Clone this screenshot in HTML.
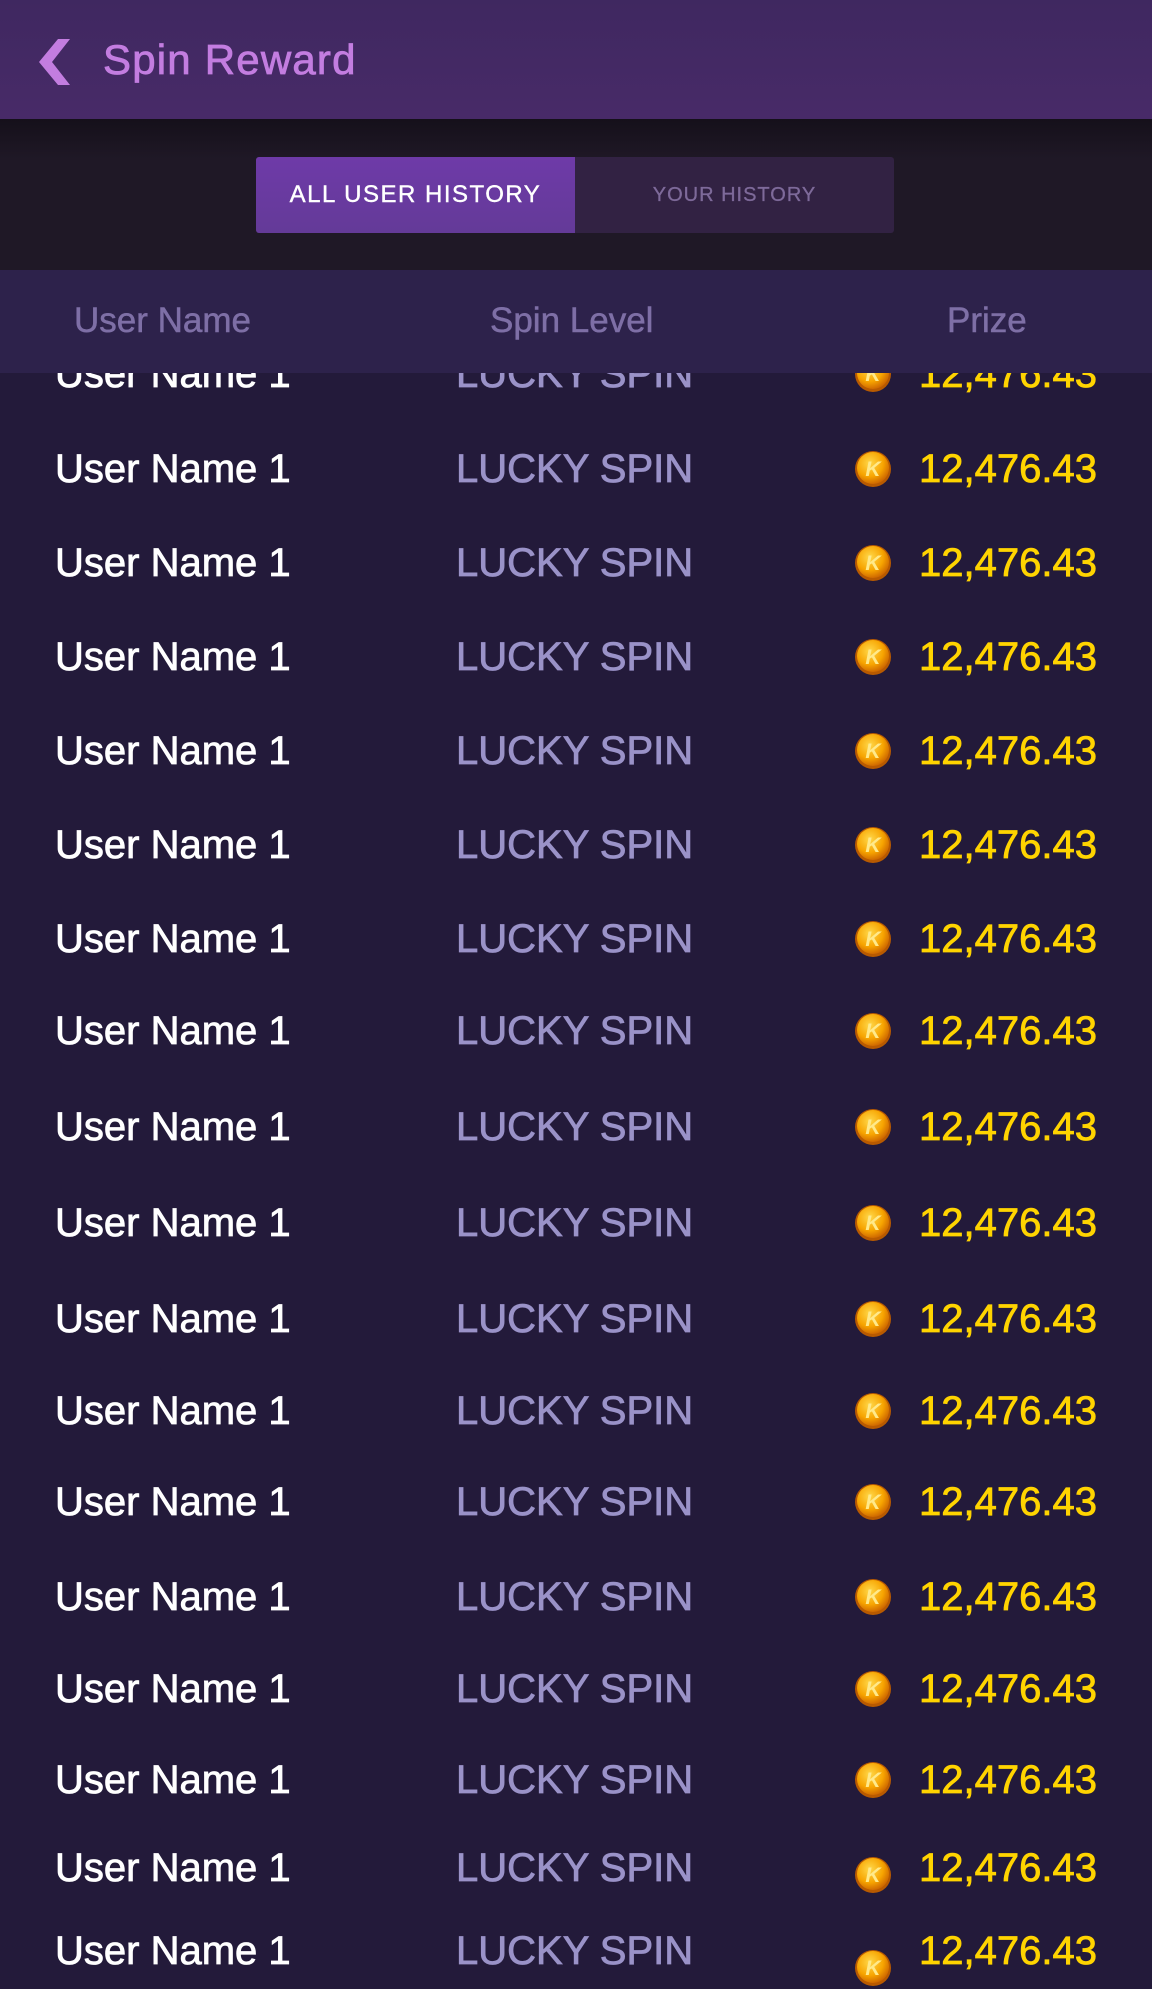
<!DOCTYPE html>
<html><head><meta charset="utf-8"><style>
*{margin:0;padding:0;box-sizing:border-box}
body{width:1152px;height:1954px;overflow:hidden;background:#231a3a;font-family:"Liberation Sans",sans-serif;position:relative}
.hdr{position:absolute;left:0;top:0;width:1152px;height:119px;background:linear-gradient(#3f2860,#482a68);z-index:5}
.title{position:absolute;left:103px;top:36px;font-size:42px;line-height:48px;color:#c37de0;letter-spacing:1.2px;-webkit-text-stroke:0.8px #c37de0}
.band{position:absolute;left:0;top:119px;width:1152px;height:151px;background:linear-gradient(#15101a,#1f1826 40px);z-index:5}
.tabs{position:absolute;left:256px;top:157px;width:638px;height:76px;background:#322243;border-radius:3px;z-index:6}
.tab1{position:absolute;left:0;top:0;width:319px;height:76px;background:linear-gradient(#6e3aa8,#643a98);border-radius:3px 0 0 3px;color:#fff;font-size:24px;line-height:76px;text-align:center;letter-spacing:1.5px;-webkit-text-stroke:0.4px #fff}
.tab2{position:absolute;left:319px;top:0;width:319px;height:76px;color:#7e6a9a;font-size:20px;line-height:76px;text-align:center;letter-spacing:1px;-webkit-text-stroke:0.3px #7e6a9a}
.th{position:absolute;left:0;top:270px;width:1152px;height:103px;background:#2d224b;z-index:5;color:#7e6fa6;font-size:35px;-webkit-text-stroke:0.5px #7e6fa6}
.th span{position:absolute;top:31px;line-height:40px}
.r{position:absolute;left:0;width:1152px;height:44px;font-size:40px;line-height:44px}
.r .u{position:absolute;left:55px;color:#fff;-webkit-text-stroke:0.8px #fff}
.r .l{position:absolute;left:456px;color:#9a92c8;-webkit-text-stroke:0.8px #9a92c8}
.r .p{position:absolute;left:919px;color:#ffd400;-webkit-text-stroke:0.8px #ffd400}
.r svg{position:absolute;left:854px;top:3px}
</style></head><body>
<div class="hdr">
<svg style="position:absolute;left:0;top:0" width="100" height="119"><polygon points="58,39 70,39 52,62 70,85 58,85 39,62" fill="#c37de0"/></svg>
<div class="title">Spin Reward</div>
</div>
<div class="band"></div>
<div class="tabs"><div class="tab1">ALL USER HISTORY</div><div class="tab2">YOUR HISTORY</div></div>
<div class="th"><span style="left:74px">User Name</span><span style="left:490px">Spin Level</span><span style="left:947px">Prize</span></div>
<svg width="0" height="0" style="position:absolute"><defs><radialGradient id="g" cx="40%" cy="35%" r="70%"><stop offset="0" stop-color="#ffd84a"/><stop offset="0.6" stop-color="#f7a400"/><stop offset="1" stop-color="#c85f00"/></radialGradient></defs></svg>
<div class="r" style="top:352px"><span class="u">User Name 1</span><span class="l">LUCKY SPIN</span><svg width="40" height="40"><circle cx="19" cy="19" r="18" fill="#b85a00"/><circle cx="19" cy="18" r="16" fill="url(#g)"/><text x="19" y="26" text-anchor="middle" font-size="21" font-weight="bold" font-style="italic" fill="#ffe98a" font-family="Liberation Sans">K</text></svg><span class="p">12,476.43</span></div>
<div class="r" style="top:447px"><span class="u">User Name 1</span><span class="l">LUCKY SPIN</span><svg width="40" height="40"><circle cx="19" cy="19" r="18" fill="#b85a00"/><circle cx="19" cy="18" r="16" fill="url(#g)"/><text x="19" y="26" text-anchor="middle" font-size="21" font-weight="bold" font-style="italic" fill="#ffe98a" font-family="Liberation Sans">K</text></svg><span class="p">12,476.43</span></div>
<div class="r" style="top:541px"><span class="u">User Name 1</span><span class="l">LUCKY SPIN</span><svg width="40" height="40"><circle cx="19" cy="19" r="18" fill="#b85a00"/><circle cx="19" cy="18" r="16" fill="url(#g)"/><text x="19" y="26" text-anchor="middle" font-size="21" font-weight="bold" font-style="italic" fill="#ffe98a" font-family="Liberation Sans">K</text></svg><span class="p">12,476.43</span></div>
<div class="r" style="top:635px"><span class="u">User Name 1</span><span class="l">LUCKY SPIN</span><svg width="40" height="40"><circle cx="19" cy="19" r="18" fill="#b85a00"/><circle cx="19" cy="18" r="16" fill="url(#g)"/><text x="19" y="26" text-anchor="middle" font-size="21" font-weight="bold" font-style="italic" fill="#ffe98a" font-family="Liberation Sans">K</text></svg><span class="p">12,476.43</span></div>
<div class="r" style="top:729px"><span class="u">User Name 1</span><span class="l">LUCKY SPIN</span><svg width="40" height="40"><circle cx="19" cy="19" r="18" fill="#b85a00"/><circle cx="19" cy="18" r="16" fill="url(#g)"/><text x="19" y="26" text-anchor="middle" font-size="21" font-weight="bold" font-style="italic" fill="#ffe98a" font-family="Liberation Sans">K</text></svg><span class="p">12,476.43</span></div>
<div class="r" style="top:823px"><span class="u">User Name 1</span><span class="l">LUCKY SPIN</span><svg width="40" height="40"><circle cx="19" cy="19" r="18" fill="#b85a00"/><circle cx="19" cy="18" r="16" fill="url(#g)"/><text x="19" y="26" text-anchor="middle" font-size="21" font-weight="bold" font-style="italic" fill="#ffe98a" font-family="Liberation Sans">K</text></svg><span class="p">12,476.43</span></div>
<div class="r" style="top:917px"><span class="u">User Name 1</span><span class="l">LUCKY SPIN</span><svg width="40" height="40"><circle cx="19" cy="19" r="18" fill="#b85a00"/><circle cx="19" cy="18" r="16" fill="url(#g)"/><text x="19" y="26" text-anchor="middle" font-size="21" font-weight="bold" font-style="italic" fill="#ffe98a" font-family="Liberation Sans">K</text></svg><span class="p">12,476.43</span></div>
<div class="r" style="top:1009px"><span class="u">User Name 1</span><span class="l">LUCKY SPIN</span><svg width="40" height="40"><circle cx="19" cy="19" r="18" fill="#b85a00"/><circle cx="19" cy="18" r="16" fill="url(#g)"/><text x="19" y="26" text-anchor="middle" font-size="21" font-weight="bold" font-style="italic" fill="#ffe98a" font-family="Liberation Sans">K</text></svg><span class="p">12,476.43</span></div>
<div class="r" style="top:1105px"><span class="u">User Name 1</span><span class="l">LUCKY SPIN</span><svg width="40" height="40"><circle cx="19" cy="19" r="18" fill="#b85a00"/><circle cx="19" cy="18" r="16" fill="url(#g)"/><text x="19" y="26" text-anchor="middle" font-size="21" font-weight="bold" font-style="italic" fill="#ffe98a" font-family="Liberation Sans">K</text></svg><span class="p">12,476.43</span></div>
<div class="r" style="top:1201px"><span class="u">User Name 1</span><span class="l">LUCKY SPIN</span><svg width="40" height="40"><circle cx="19" cy="19" r="18" fill="#b85a00"/><circle cx="19" cy="18" r="16" fill="url(#g)"/><text x="19" y="26" text-anchor="middle" font-size="21" font-weight="bold" font-style="italic" fill="#ffe98a" font-family="Liberation Sans">K</text></svg><span class="p">12,476.43</span></div>
<div class="r" style="top:1297px"><span class="u">User Name 1</span><span class="l">LUCKY SPIN</span><svg width="40" height="40"><circle cx="19" cy="19" r="18" fill="#b85a00"/><circle cx="19" cy="18" r="16" fill="url(#g)"/><text x="19" y="26" text-anchor="middle" font-size="21" font-weight="bold" font-style="italic" fill="#ffe98a" font-family="Liberation Sans">K</text></svg><span class="p">12,476.43</span></div>
<div class="r" style="top:1389px"><span class="u">User Name 1</span><span class="l">LUCKY SPIN</span><svg width="40" height="40"><circle cx="19" cy="19" r="18" fill="#b85a00"/><circle cx="19" cy="18" r="16" fill="url(#g)"/><text x="19" y="26" text-anchor="middle" font-size="21" font-weight="bold" font-style="italic" fill="#ffe98a" font-family="Liberation Sans">K</text></svg><span class="p">12,476.43</span></div>
<div class="r" style="top:1480px"><span class="u">User Name 1</span><span class="l">LUCKY SPIN</span><svg width="40" height="40"><circle cx="19" cy="19" r="18" fill="#b85a00"/><circle cx="19" cy="18" r="16" fill="url(#g)"/><text x="19" y="26" text-anchor="middle" font-size="21" font-weight="bold" font-style="italic" fill="#ffe98a" font-family="Liberation Sans">K</text></svg><span class="p">12,476.43</span></div>
<div class="r" style="top:1575px"><span class="u">User Name 1</span><span class="l">LUCKY SPIN</span><svg width="40" height="40"><circle cx="19" cy="19" r="18" fill="#b85a00"/><circle cx="19" cy="18" r="16" fill="url(#g)"/><text x="19" y="26" text-anchor="middle" font-size="21" font-weight="bold" font-style="italic" fill="#ffe98a" font-family="Liberation Sans">K</text></svg><span class="p">12,476.43</span></div>
<div class="r" style="top:1667px"><span class="u">User Name 1</span><span class="l">LUCKY SPIN</span><svg width="40" height="40"><circle cx="19" cy="19" r="18" fill="#b85a00"/><circle cx="19" cy="18" r="16" fill="url(#g)"/><text x="19" y="26" text-anchor="middle" font-size="21" font-weight="bold" font-style="italic" fill="#ffe98a" font-family="Liberation Sans">K</text></svg><span class="p">12,476.43</span></div>
<div class="r" style="top:1758px"><span class="u">User Name 1</span><span class="l">LUCKY SPIN</span><svg width="40" height="40"><circle cx="19" cy="19" r="18" fill="#b85a00"/><circle cx="19" cy="18" r="16" fill="url(#g)"/><text x="19" y="26" text-anchor="middle" font-size="21" font-weight="bold" font-style="italic" fill="#ffe98a" font-family="Liberation Sans">K</text></svg><span class="p">12,476.43</span></div>
<div class="r" style="top:1846px"><span class="u">User Name 1</span><span class="l">LUCKY SPIN</span><svg width="40" height="40" style="top:10px"><circle cx="19" cy="19" r="18" fill="#b85a00"/><circle cx="19" cy="18" r="16" fill="url(#g)"/><text x="19" y="26" text-anchor="middle" font-size="21" font-weight="bold" font-style="italic" fill="#ffe98a" font-family="Liberation Sans">K</text></svg><span class="p">12,476.43</span></div>
<div class="r" style="top:1929px"><span class="u">User Name 1</span><span class="l">LUCKY SPIN</span><svg width="40" height="40" style="top:20px"><circle cx="19" cy="19" r="18" fill="#b85a00"/><circle cx="19" cy="18" r="16" fill="url(#g)"/><text x="19" y="26" text-anchor="middle" font-size="21" font-weight="bold" font-style="italic" fill="#ffe98a" font-family="Liberation Sans">K</text></svg><span class="p">12,476.43</span></div>
</body></html>
